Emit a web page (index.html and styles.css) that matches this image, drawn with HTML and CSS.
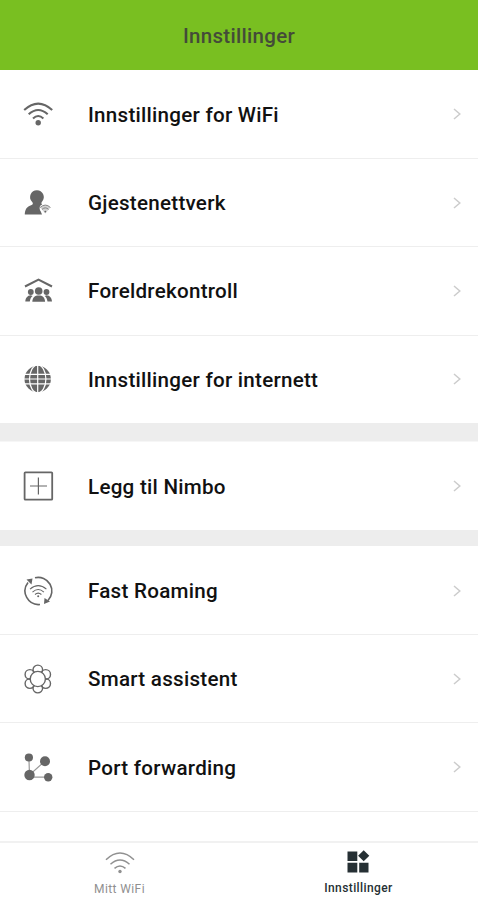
FILE: index.html
```html
<!DOCTYPE html>
<html lang="no">
<head>
  <meta charset="UTF-8">
  <meta name="viewport" content="width=device-width, initial-scale=1.0">
  <title>Innstillinger</title>
  <link rel="stylesheet" href="styles.css">
</head>
<body>
  <svg class="defs" width="0" height="0">
    <symbol id="chevron" viewBox="0 0 10 14">
      <path d="M2 2 L7.8 7 L2 12" fill="none" stroke="currentColor" stroke-width="1.5"/>
    </symbol>
  </svg>

  <header class="header">
    <h1>Innstillinger</h1>
  </header>

  <main class="settings">
    <section class="group">
      <a class="row">
        <svg class="icon" viewBox="0 0 32 32">
          <g fill="none" stroke="currentColor" stroke-width="2.1">
            <path d="M2.2 12 Q16.2 -.8 30.2 12"/>
            <path d="M6.7 16.3 Q16.2 7.7 25.7 16.3"/>
            <path d="M11 20.4 Q16.2 15.6 21.4 20.4"/>
          </g>
          <circle cx="16.2" cy="24.7" r="2.7" fill="currentColor"/>
        </svg>
        <span class="label">Innstillinger for WiFi</span>
        <svg class="chevron"><use href="#chevron"/></svg>
      </a>
      <a class="row">
        <svg class="icon" viewBox="0 0 32 32">
          <path d="M15 3.2a6.8 6.8 0 0 1 5.3 11c-1.1 1.4-1.3 2.3-.1 3.2-2.8.9-3.3 4.2-1.4 7l1.2 3.2H2.8c0-4.7 1.8-8.3 6.8-9.7 1.5-.5 1.7-1.8.4-3.2A6.8 6.8 0 0 1 15 3.2z" fill="currentColor"/>
          <path d="M18.2 20.4Q23.3 15.8 28.3 20.4L23.3 26.5z" fill="currentColor" opacity=".3"/>
          <g fill="none" stroke="currentColor" stroke-width=".9" opacity=".8">
            <path d="M18 20.5Q23.3 15.6 28.5 20.5"/>
            <path d="M20 22.4Q23.3 19.3 26.6 22.4"/>
          </g>
          <circle cx="23.3" cy="24.6" r=".9" fill="currentColor"/>
        </svg>
        <span class="label">Gjestenettverk</span>
        <svg class="chevron"><use href="#chevron"/></svg>
      </a>
      <a class="row">
        <svg class="icon" viewBox="0 0 32 32">
          <path d="M3 11.5 16.5 4.6 30 11.5" fill="none" stroke="currentColor" stroke-width="2.1"/>
          <g fill="currentColor">
            <circle cx="8.8" cy="17" r="2.9"/>
            <circle cx="24.5" cy="17" r="2.9"/>
            <path d="M3.3 26.5c.3-3.5 2-5.9 5.5-6.2l1.8.6c-1.7 1.2-2.3 2.8-2.8 5.6zM30 26.5c-.3-3.5-2-5.9-5.5-6.2l-1.8.6c1.7 1.2 2.3 2.8 2.8 5.6z"/>
            <circle cx="16.7" cy="16" r="3.8"/>
            <path d="M10.3 26.7c.4-4.2 2.4-6.1 6.4-6.1s6 1.9 6.4 6.1z"/>
          </g>
        </svg>
        <span class="label">Foreldrekontroll</span>
        <svg class="chevron"><use href="#chevron"/></svg>
      </a>
      <a class="row">
        <svg class="icon" viewBox="0 0 32 32">
          <circle cx="15.7" cy="16" r="13.2" fill="currentColor"/>
          <g fill="none" stroke="#fff" stroke-width="1.2">
            <path d="M15.7 2v28M2 11.4h28M2 16h28M2 20.8h28"/>
            <ellipse cx="15.7" cy="16" rx="8.2" ry="14"/>
          </g>
        </svg>
        <span class="label">Innstillinger for internett</span>
        <svg class="chevron"><use href="#chevron"/></svg>
      </a>
    </section>

    <section class="group">
      <a class="row">
        <svg class="icon" viewBox="0 0 32 32">
          <rect x="2.6" y="2.3" width="27.6" height="27.4" rx=".8" fill="none" stroke="currentColor" stroke-width="1.8"/>
          <path d="M16.4 7.5v17M8 16h17" stroke="currentColor" stroke-width="1.2"/>
        </svg>
        <span class="label">Legg til Nimbo</span>
        <svg class="chevron"><use href="#chevron"/></svg>
      </a>
    </section>

    <section class="group">
      <a class="row">
        <svg class="icon" viewBox="0 0 32 32">
          <g fill="none" stroke="currentColor" stroke-width="1.6">
            <path d="M13 2.8A13.6 13.6 0 0 1 26 25.5"/>
            <path d="M18 29.5A13.6 13.6 0 0 1 6 7.5"/>
          </g>
          <path d="M4.5 4.5l6-1-1 6zM28 26.5l-6 2.5.5-6z" fill="currentColor"/>
          <g fill="none" stroke="currentColor" stroke-width="1.1">
            <path d="M8 14.2Q16.2 7 24.4 14.2"/>
            <path d="M10.5 17.1Q16.2 12 21.9 17.1"/>
            <path d="M13 19.5Q16.2 16.7 19.4 19.5"/>
          </g>
          <circle cx="16.2" cy="21.2" r="1" fill="currentColor"/>
        </svg>
        <span class="label">Fast Roaming</span>
        <svg class="chevron"><use href="#chevron"/></svg>
      </a>
      <a class="row">
        <svg class="icon" viewBox="0 0 32 32">
          <g fill="none" stroke="currentColor" stroke-width="1.4">
            <circle cx="15.8" cy="6.9" r="4.8"/>
            <circle cx="23.7" cy="11.4" r="4.8"/>
            <circle cx="23.7" cy="20.6" r="4.8"/>
            <circle cx="15.8" cy="25.1" r="4.8"/>
            <circle cx="7.9" cy="20.6" r="4.8"/>
            <circle cx="7.9" cy="11.4" r="4.8"/>
            <circle cx="15.8" cy="16" r="7.6" fill="#fff"/>
          </g>
        </svg>
        <span class="label">Smart assistent</span>
        <svg class="chevron"><use href="#chevron"/></svg>
      </a>
      <a class="row">
        <svg class="icon" viewBox="0 0 32 32">
          <path d="M6.9 6.5 7.5 24 23 10M7.5 26.2H26" fill="none" stroke="#999" stroke-width="1.2"/>
          <g fill="currentColor">
            <circle cx="6.9" cy="6.5" r="4.1"/>
            <circle cx="23" cy="10.3" r="5"/>
            <circle cx="7.5" cy="24" r="5.2"/>
            <circle cx="26.2" cy="26.2" r="4.2"/>
          </g>
        </svg>
        <span class="label">Port forwarding</span>
        <svg class="chevron"><use href="#chevron"/></svg>
      </a>
    </section>
  </main>

  <nav class="tabs">
    <a class="tab">
      <svg class="tab-icon" viewBox="0 0 32 24">
        <g fill="none" stroke="currentColor" stroke-width="1.5">
          <path d="M2 8.7Q16 -4.7 30 8.7"/>
          <path d="M6.5 13.2Q16 4.7 25.5 13.2"/>
          <path d="M10.5 17.4Q16 12.7 21.5 17.4"/>
        </g>
        <circle cx="16" cy="20.5" r="1.7" fill="currentColor"/>
      </svg>
      <span>Mitt WiFi</span>
    </a>
    <a class="tab active">
      <svg class="tab-icon" viewBox="0 0 32 24">
        <path d="M4.5.5h9.8v9.5H4.5zM4.5 11.8h9.8v9.7H4.5zM16.2 11.8h9.3v9.7h-9.3zM20.7-.7l5.6 5.5-5.6 5.5-5.6-5.5z" fill="currentColor"/>
      </svg>
      <span>Innstillinger</span>
    </a>
  </nav>
</body>
</html>
```

FILE: styles.css
```css
* {
  box-sizing: border-box;
}

body {
  margin: 0;
  height: 900px;
  display: flex;
  flex-direction: column;
  overflow: hidden;
  background: #fff;
  color: #111;
  font-family: Roboto, "Liberation Sans", sans-serif;
}

.defs {
  display: none;
}

.header {
  flex: none;
  height: 69.7px;
  display: flex;
  align-items: center;
  justify-content: center;
  padding-top: 2px;
  background: #79bf21;
}

.header h1 {
  margin: 0;
  font-size: 20.5px;
  font-weight: 500;
  letter-spacing: 0.3px;
  color: #444b39;
}

.settings {
  flex: 1;
  min-height: 0;
  overflow: hidden;
}

.group + .group {
  padding-top: 18.5px;
  background: linear-gradient(#ededed, #ededed) top / 100% 18.5px no-repeat;
}

.group + .group + .group {
  padding-top: 16.2px;
  background-size: 100% 16.2px;
}

.row {
  height: 88.3px;
  display: flex;
  align-items: center;
  padding: 1px 16px 0 22px;
}

.row + .row {
  padding-top: 0;
  border-top: 1px solid #eee;
}

.group:last-child {
  border-bottom: 1px solid #eee;
}

.icon {
  flex: none;
  width: 32px;
  height: 32px;
  margin-right: 34px;
  color: #666;
}

.label {
  flex: 1;
  padding-top: 1px;
  font-size: 20.6px;
  font-weight: 500;
  letter-spacing: 0.26px;
}

.chevron {
  width: 10px;
  height: 14px;
  color: #ccc;
}

.tabs {
  flex: none;
  height: 59px;
  display: flex;
  border-top: 2px solid #f1f1f1;
  background: #fff;
}

.tab {
  flex: 1;
  display: flex;
  flex-direction: column;
  align-items: center;
  padding-top: 8px;
  font-size: 12px;
  line-height: 14px;
  letter-spacing: 0.4px;
  color: #909090;
}

.tab-icon {
  width: 32px;
  height: 24px;
  margin-bottom: 7px;
  overflow: visible;
}

.tab.active {
  font-weight: 500;
  color: #263034;
}

.tab.active .tab-icon {
  margin-bottom: 6px;
}
```
